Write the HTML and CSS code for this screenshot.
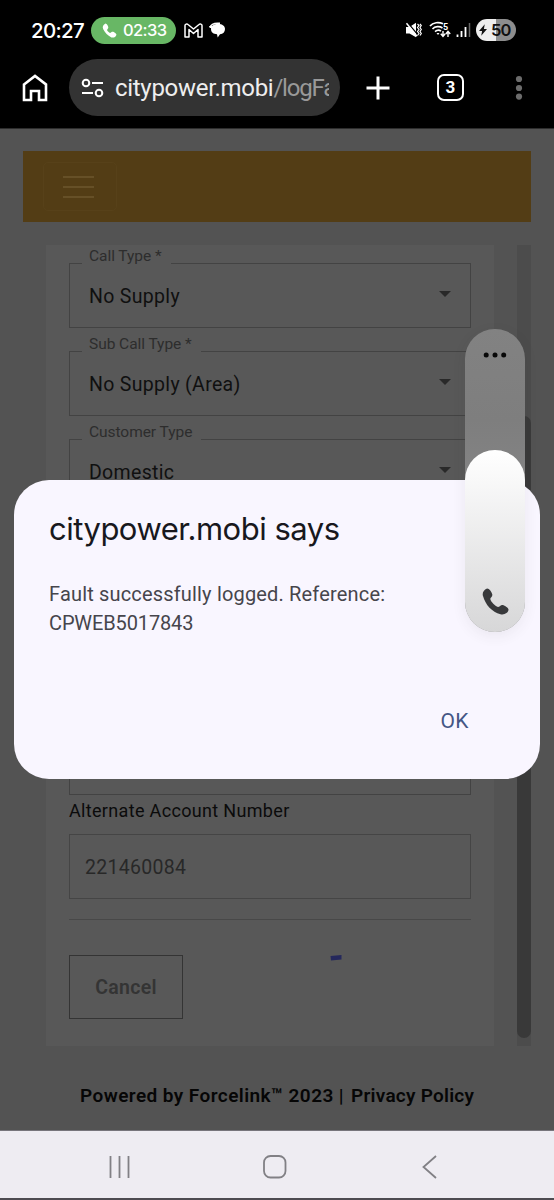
FILE: index.html
```html
<!DOCTYPE html>
<html lang="en">
<head>
<meta charset="utf-8">
<title>citypower.mobi</title>
<link rel="stylesheet" href="styles.css">
</head>
<body>
<div class="phone">
  <header class="status">
    <span class="clock">20:27</span>
    <span class="call-pill">
      <svg width="15" height="15" viewBox="0 0 24 24"><path fill="#fff" d="M5 1C2 3 0 6 2 10c3 6 7 10 13 13 4 1 7-1 8-4 1-2-5-6-7-5l-3 2c-2-1-4-3-5-5l2-3c1-2-3-8-5-7z"/></svg>
      <span>02:33</span>
    </span>
    <svg class="mail" width="19" height="15" viewBox="0 0 19 15"><path fill="none" stroke="#fff" stroke-width="1.500" stroke-linejoin="round" d="M1 14V2.500C1 1 3 .6 4 1.500L9.500 6 15 1.500C16 .6 18 1 18 2.500V14H14V6.500L9.500 10.500 5 6.500V14Z"/></svg>
    <svg class="chat" width="17" height="16" viewBox="0 0 17 16"><path d="M1 5.500C2 2 6 .8 11 1.300" fill="none" stroke="#fff" stroke-width="1.500"/><path fill="#fff" d="M2 7c0-3 2.500-5 7-5s7 2 7 5-2 5-5 5.200L8.700 15.500 8 12.200C4.500 12 2 10.500 2 7zM0 4h3v2H1z"/></svg>
    <span class="status-gap"></span>
    <svg class="mute" width="17" height="16" viewBox="0 0 17 16"><path fill="#fff" d="M1 5h3.500L11 .8v14.400L4.500 11.500H1z"/><path d="M2.500 .5l10 12" stroke="#000" stroke-width="1.200"/><path d="M1.500 1.200l10.500 13" stroke="#fff" stroke-width="1.400"/><path d="M12.500 2l1.500 1.500-1.500 2 1.500 2-1.500 2 1.500 2-1.500 2M15 2l1.300 1.500L15 5.500l1.300 2-1.300 2 1.300 2-1.300 2" fill="none" stroke="#fff" stroke-width="1.200"/></svg>
    <svg class="wifi" width="22" height="18" viewBox="0 0 22 18"><g fill="none" stroke="#fff" stroke-width="1.700"><path d="M1 5C4 1.200 10 .8 14 2.800"/><path d="M3.500 8C6 5.200 10.500 5 13.500 7"/><path d="M6 10.700C8 9 10.500 9 12 10.200"/></g><path d="M7.500 12l3 0-1.500 2z" fill="#fff"/><path d="M14 10v5M11.800 12.800l2.200 2.700 2.200-2.700M19 16v-5.500M16.800 13l2.200-2.700 2.200 2.700" fill="none" stroke="#fff" stroke-width="1.400"/><text x="14" y="8.500" class="wifi-num">5</text></svg>
    <svg class="signal" width="15" height="16" viewBox="0 0 15 16"><path d="M1.500 12.500V15M5.500 9V15M9.500 5V15" stroke="#fff" stroke-width="1.800"/><path d="M13.500 1V15" stroke="#666" stroke-width="1.500"/></svg>
    <span class="battery"><svg width="8" height="12" viewBox="0 0 9 13"><path d="M6.500 0L0 7.500h3.500L2.500 13 9 5.500H5.500z" fill="#111"/></svg><span>50</span></span>
  </header>

  <nav class="toolbar">
    <svg class="home" width="26" height="28" viewBox="0 0 26 28"><path d="M2 10.500L13 2l11 8.500V26H17V17H9v9H2z" fill="none" stroke="#fff" stroke-width="2.600"/></svg>
    <div class="address">
      <svg width="23" height="20" viewBox="0 0 23 20"><g fill="none" stroke="#fff" stroke-width="2"><circle cx="5" cy="5" r="3.300"/><circle cx="18" cy="15" r="3.300"/><path d="M11 5h11M1 15h11"/></g></svg>
      <span class="url">citypower.mobi<span class="path">/logFa</span></span>
    </div>
    <svg class="plus" width="24" height="24" viewBox="0 0 24 24"><path d="M12 .5v23M.5 12h23" stroke="#fff" stroke-width="3"/></svg>
    <span class="tabs">3</span>
    <svg class="more" width="8" height="26" viewBox="0 0 8 26"><g fill="#6c6c6c"><circle cx="4" cy="4" r="3.100"/><circle cx="4" cy="13" r="3.100"/><circle cx="4" cy="21.600" r="3.100"/></g></svg>
  </nav>

  <main class="page">
    <div class="banner">
      <div class="menu"><i></i><i></i><i></i></div>
    </div>
    <div class="content">
      <section class="card">
        <div class="field"><label class="w-call">Call Type *</label><span>No Supply</span><b></b></div>
        <div class="field"><label class="w-sub">Sub Call Type *</label><span>No Supply (Area)</span><b></b></div>
        <div class="field tall"><label class="w-cust">Customer Type</label><span>Domestic</span><b></b></div>
        <div class="caption">Alternate Account Number</div>
        <div class="input">221460084</div>
        <div class="actions">
          <div class="cancel">Cancel</div>
          <svg class="spinner" width="12" height="8" viewBox="0 0 12 8"><path d="M.5 2L11.500 1V5.500L1 6.500z" fill="#25285c"/></svg>
        </div>
      </section>
      <div class="track"><div class="thumb"></div></div>
    </div>
    <footer class="powered"><span class="maker">Powered by Forcelink™ 2023 |</span><span class="privacy">Privacy Policy</span></footer>
  </main>

  <nav class="keys">
    <svg width="22" height="22" viewBox="0 0 22 22"><path d="M1.500 0v22M10.500 0v22M19.500 0v22" stroke="#818085" stroke-width="1.800"/></svg>
    <svg width="24" height="24" viewBox="0 0 24 24"><rect x="1" y="1" width="21.500" height="21.500" rx="6.500" fill="none" stroke="#818085" stroke-width="1.800"/></svg>
    <svg width="15" height="24" viewBox="0 0 15 24"><path d="M14 1L1.500 12 14 23" fill="none" stroke="#818085" stroke-width="1.800"/></svg>
  </nav>

  <div class="dialog">
    <h1>citypower.mobi says</h1>
    <p><span class="line1">Fault successfully logged. Reference:</span><br><span class="line2">CPWEB5017843</span></p>
    <div class="ok">OK</div>
  </div>

  <div class="volume">
    <svg class="dots" width="24" height="6" viewBox="0 0 24 6"><circle cx="3.200" cy="3" r="2.500"/><circle cx="12" cy="3" r="2.500"/><circle cx="20.700" cy="3" r="2.500"/></svg>
    <div class="level">
      <svg width="27" height="27" viewBox="0 0 27 27"><path fill="#38393b" d="M5 .5C1.500 2 0 5 1 8c2.500 9 9 16 17.500 18.200 4 1 7.500-1.500 8-4.200.3-2-3.500-4.300-5.800-5-1.800-.5-3 2-4.700 2C13 18 9 14 8.300 11c0-1.500 2.400-2.500 2-4.500C9.800 4 7 .2 5 .5z"/></svg>
    </div>
  </div>
</div>
</body>
</html>
```
FILE: styles.css
```css
* { box-sizing: border-box; }
body { margin: 0; font-family: Roboto, "Liberation Sans", sans-serif; }
svg { display: block; flex: none; }
.phone { position: relative; width: 554px; height: 1200px; overflow: hidden; background: #535353; white-space: nowrap; }

.status { display: flex; align-items: center; height: 60px; padding: 0 38px 0 31px; background: #000; color: #fff; }
.clock { width: 60px; font: 500 20.500px Inter, sans-serif; letter-spacing: -0.7px; }
.call-pill { display: flex; align-items: center; gap: 6px; width: 85px; height: 27px; padding-left: 11px; border-radius: 14px; background: #68b765; font: 500 16.500px Inter, sans-serif; letter-spacing: -0.6px; }
.mail { margin-left: 8px; }
.chat { margin-left: 6px; }
.status-gap { flex: 1; }
.wifi { margin-left: 7px; }
.wifi-num { font: 700 9px Roboto, sans-serif; fill: #fff; }
.signal { margin-left: 5px; }
.battery { display: flex; align-items: center; gap: 4px; width: 40px; height: 22px; margin-left: 5px; padding-left: 3px; border-radius: 11px; background: linear-gradient(90deg, #eee 50%, #8d8d8d 50%); color: #111; font: 600 16.500px Inter, sans-serif; letter-spacing: -0.8px; }

.toolbar { display: flex; align-items: center; height: 69px; padding: 0 31px 13px 22px; background: #000; border-bottom: 1px solid #2d2d2d; }
.address { display: flex; align-items: center; width: 271px; height: 57px; margin-left: 21px; padding-left: 12px; border-radius: 29px; background: #333; }
.url { width: 214px; margin-left: 11px; overflow: hidden; color: #eee; font-size: 24px; line-height: 32px; letter-spacing: -0.3px; }
.path { color: #999; letter-spacing: -1.2px; }
.plus { margin-left: 26px; }
.tabs { width: 27px; height: 27px; margin-left: 47px; border: 2.500px solid #fff; border-radius: 7px; color: #fff; font-size: 17px; font-weight: 700; line-height: 23px; text-align: center; }
.more { margin-left: 51px; }

.page { height: 1001px; padding: 22px 23px 0; background: #535353; }
.banner { height: 71px; padding: 11px 20px; background: #533d15; }
.menu { display: flex; flex-direction: column; align-items: center; justify-content: center; gap: 8px; width: 74px; height: 49px; padding-right: 3px; border: 1px solid #574119; border-radius: 5px; }
.menu i { width: 31px; height: 2px; background: #665027; }
.content { display: flex; justify-content: space-between; height: 801px; margin-top: 23px; padding-left: 23px; }
.card { width: 448px; height: 801px; padding: 18px 23px; background: #585858; }
.track { width: 14px; padding-top: 171px; background: #4c4c4c; }
.thumb { height: 622px; border-radius: 7px; background: #393939; }
.field { display: flex; align-items: center; justify-content: space-between; position: relative; height: 65px; margin-bottom: 23px; padding: 2px 19px 0 19px; border: 1px solid #434343; color: #101010; font-size: 19.500px; letter-spacing: 0.320px; }
.field label { position: absolute; left: 12px; top: -19px; padding: 0 7px; height: 22px; background: #585858; color: #2d2d2d; font-size: 15.500px; line-height: 23px; letter-spacing: -0.050px; }
.field b { border: solid transparent; border-width: 6px 6px 0; border-top-color: #292929; margin: -6px 0 0; }
.tall { height: 356px; align-items: flex-start; margin-bottom: 0; padding-top: 21px; }
.tall b { margin-top: 6px; }
.w-call { width: 89px; }
.w-sub, .w-cust { width: 119px; }
.caption { height: 39px; color: #0b0b0b; font-size: 18px; line-height: 31px; letter-spacing: 0.330px; }
.input { height: 65px; padding-left: 15px; border: 1px solid #454545; color: #282828; font-size: 19.500px; line-height: 65px; letter-spacing: 0.300px; }
.actions { display: flex; margin-top: 20px; padding-top: 35px; border-top: 1px solid #484848; }
.cancel { width: 114px; height: 64px; border: 1px solid #343434; color: #343434; font-size: 19.500px; font-weight: 600; line-height: 64px; letter-spacing: 0.300px; text-align: center; }
.spinner { margin-left: 147px; margin-top: -1px; }
.powered { display: flex; gap: 7px; padding: 38px 0 0 57px; color: #060606; font-size: 19px; font-weight: 600; line-height: 24px; }
.maker { letter-spacing: 0.430px; }
.privacy { letter-spacing: 0.250px; }
.keys { display: flex; align-items: center; height: 70px; padding: 5px 0 0 109px; background: #eeecf2; border-top: 1px solid #77757c; border-bottom: 2px solid #4d4b51; }
.keys svg + svg { margin-left: 132px; }
.keys svg:last-child { margin-left: 135px; }

.dialog { position: absolute; left: 14px; top: 480px; width: 526px; height: 299px; padding: 29px 35px; border-radius: 35px; background: #f9f6ff; }
.dialog h1 { margin: 0; color: #18181d; font: 400 31px/39px Inter, sans-serif; letter-spacing: -0.5px; }
.dialog p { margin: 32px 0 0; color: #46454c; font-size: 20px; line-height: 29px; }
.line1 { letter-spacing: 0.170px; }
.line2 { letter-spacing: -0.130px; }
.ok { margin: 69px 36px 0 0; color: #455685; font-size: 21px; font-weight: 400; line-height: 29px; text-align: right; letter-spacing: 0.500px; }
.volume { position: absolute; left: 465px; top: 329px; width: 60px; height: 303px; border-radius: 30px; background: linear-gradient(#828282, #7e7e7e 30%, #929294); box-shadow: 0 4px 14px rgba(60, 60, 60, .08); }
.dots { margin: 23px 0 0 18px; fill: #080808; }
.level { display: flex; align-items: flex-end; justify-content: center; height: 182px; margin-top: 92px; padding-bottom: 17px; border-radius: 30px; background: linear-gradient(#fff, #d7d7d8); }
```
